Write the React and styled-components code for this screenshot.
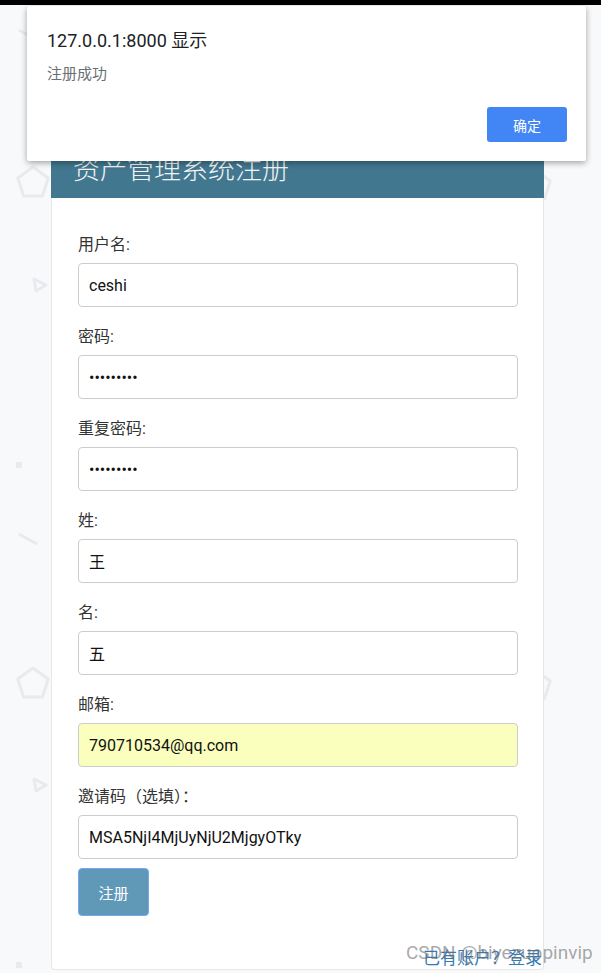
import React from "react";
import styled, { createGlobalStyle } from "styled-components";

const GlobalStyle = createGlobalStyle`
  body {
    margin: 0;
    background: #f8f9fb;
    font-family: Roboto, "Noto Sans CJK SC", sans-serif;
  }
  * { box-sizing: border-box; }
`;

const fields = [
  { label: "用户名:", value: "ceshi" },
  { label: "密码:", value: "ceshi1234", type: "password" },
  { label: "重复密码:", value: "ceshi1234", type: "password" },
  { label: "姓:", value: "王" },
  { label: "名:", value: "五" },
  { label: "邮箱:", value: "790710534@qq.com", autofill: true },
  { label: "邀请码（选填）：", value: "MSA5NjI4MjUyNjU2MjgyOTky" },
];

function Backdrop() {
  const pent = (cx, cy, r) => {
    const pts = [];
    for (let i = 0; i < 5; i++) {
      const a = -Math.PI / 2 + (i * 2 * Math.PI) / 5;
      pts.push(`${cx + r * Math.cos(a)},${cy + r * Math.sin(a)}`);
    }
    return pts.join(" ");
  };
  return (
    <Shapes width="601" height="973">
      <g fill="none" stroke="#e8eaee" strokeWidth="3" strokeLinejoin="round">
        <polygon points={pent(33, 183, 16)} />
        <polygon points={pent(33, 684, 16)} />
        <polygon points={pent(535, 186, 16)} />
        <polygon points={pent(535, 686, 16)} />
        <polygon points="34,279 46,285 36,291" />
        <polygon points="34,779 46,785 36,791" />
        <line x1="19" y1="534" x2="37" y2="544" />
        <line x1="19" y1="30" x2="37" y2="40" />
      </g>
      <g fill="#e8eaee">
        <rect x="16" y="462" width="6" height="6" />
        <rect x="16" y="962" width="6" height="6" />
      </g>
    </Shapes>
  );
}

export default function App() {
  return (
    <>
      <GlobalStyle />
      <Page>
        <TopStrip />
        <Backdrop />
        <Card>
          <Header>资产管理系统注册</Header>
          <Body>
            {fields.map((f, i) => (
              <Field key={f.label} last={i === fields.length - 1}>
                <Label>{f.label}</Label>
                <Input
                  readOnly
                  type={f.type || "text"}
                  value={f.value}
                  autofill={f.autofill}
                />
              </Field>
            ))}
            <Submit>注册</Submit>
            <Footer>
              <LoginLink>已有账户？登录</LoginLink>
            </Footer>
          </Body>
        </Card>
        <Watermark>CSDN @biyezuopinvip</Watermark>
        <Dialog>
          <DialogTitle>127.0.0.1:8000 显示</DialogTitle>
          <DialogMessage>注册成功</DialogMessage>
          <DialogActions>
            <OkButton>确定</OkButton>
          </DialogActions>
        </Dialog>
      </Page>
    </>
  );
}

const Page = styled.div`
  position: relative;
  width: 601px;
  height: 973px;
  overflow: hidden;
`;

const TopStrip = styled.div`
  height: 5px;
  background: #000;
`;

const Shapes = styled.svg`
  position: absolute;
  left: 0;
  top: 0;
  z-index: 0;
`;

const Card = styled.div`
  position: relative;
  z-index: 1;
  width: 493px;
  margin: 134px 0 0 51px;
  background: #fff;
  border: 1px solid #e6e6e6;
  border-top: none;
  border-radius: 0 0 4px 4px;
`;

const Header = styled.div`
  height: 59px;
  margin: 0 -1px;
  padding: 12px 0 0 22px;
  background: #41778f;
  color: #f3f3f3;
  font-size: 27px;
  font-weight: 300;
  line-height: 38px;
`;

const Body = styled.div`
  padding: 37px 25px 0 26px;
`;

const Field = styled.div`
  margin-bottom: ${(p) => (p.last ? "9px" : "20px")};
`;

const Label = styled.label`
  display: block;
  margin-bottom: 8px;
  color: #333;
  font-size: 16px;
  line-height: 20px;
`;

const Input = styled.input.withConfig({
  shouldForwardProp: (prop) => prop !== "autofill",
})`
  display: block;
  width: 100%;
  height: 44px;
  padding: 0 10px;
  border: 1px solid #ccc;
  border-radius: 4px;
  background: ${(p) => (p.autofill ? "#faffbd" : "#fff")};
  color: #111;
  font-family: Roboto, "Noto Sans CJK SC", sans-serif;
  font-size: 16px;
  outline: none;
`;

const Submit = styled.button`
  display: block;
  width: 71px;
  height: 48px;
  padding: 0;
  border: 1px solid #79a7ef;
  border-radius: 4px;
  background: #5f99b7;
  color: #fff;
  font-family: Roboto, "Noto Sans CJK SC", sans-serif;
  font-size: 15px;
`;

const Footer = styled.div`
  margin: 32px -24px 0 0;
  text-align: right;
  line-height: 20px;
`;

const LoginLink = styled.a`
  color: #337ab7;
  font-size: 17px;
`;

const Watermark = styled.div`
  position: absolute;
  left: 406px;
  top: 941px;
  z-index: 2;
  white-space: nowrap;
  color: rgba(110, 110, 110, 0.6);
  font-family: Roboto, sans-serif;
  font-size: 19px;
  line-height: 24px;
`;

const Dialog = styled.div`
  position: absolute;
  left: 27px;
  top: 6px;
  z-index: 3;
  width: 559px;
  height: 155px;
  padding: 23px 19px 0 20px;
  background: #fff;
  border-radius: 2px;
  box-shadow: 0 2px 6px rgba(0, 0, 0, 0.35);
`;

const DialogTitle = styled.div`
  color: #202124;
  font-size: 18px;
  line-height: 24px;
`;

const DialogMessage = styled.div`
  margin-top: 11px;
  color: #6b6f73;
  font-size: 15px;
  line-height: 20px;
`;

const DialogActions = styled.div`
  display: flex;
  justify-content: flex-end;
  margin-top: 23px;
`;

const OkButton = styled.button`
  width: 80px;
  height: 35px;
  border: none;
  border-radius: 3px;
  background: #4285f4;
  color: #fff;
  font-family: Roboto, "Noto Sans CJK SC", sans-serif;
  font-size: 14px;
`;
